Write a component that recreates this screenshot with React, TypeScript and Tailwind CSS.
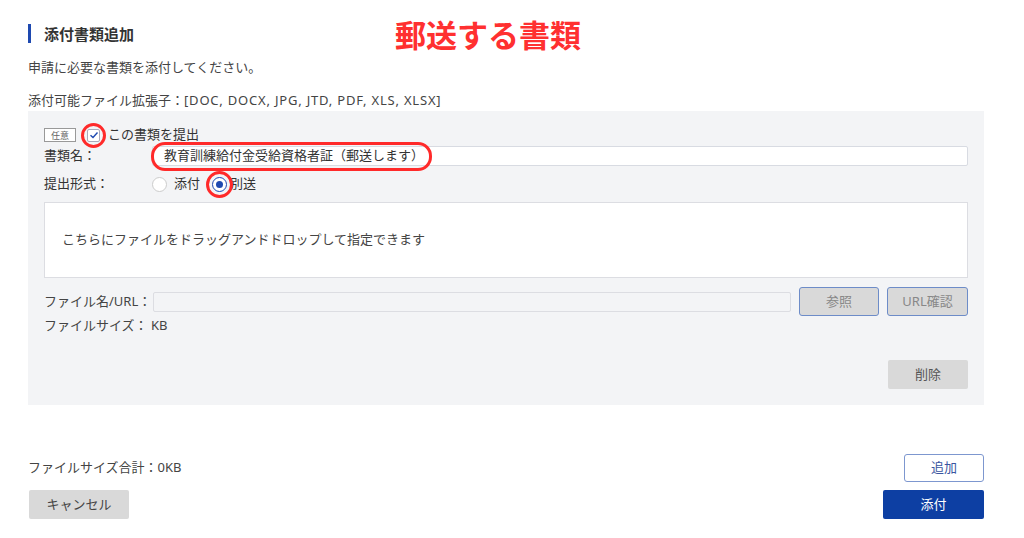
import React from "react";

const font = {
  fontFamily: '"Noto Sans", "Noto Sans CJK JP", sans-serif',
};

const Ring: React.FC<{ className: string }> = ({ className }) => (
  <span
    className={`pointer-events-none absolute rounded-full border-[3px] border-[#ff2a2a] ${className}`}
  />
);

const App: React.FC = () => {
  return (
    <div
      className="min-h-[538px] w-[1024px] bg-white pl-[28px] pr-[40px] text-[13px] text-[#444]"
      style={font}
    >
      {/* heading */}
      <div className="relative flex h-[50px] items-end pb-[5px]">
        <div className="flex items-center gap-[13px]">
          <span className="h-[19px] w-[3px] bg-[#1e49b0]" />
          <span className="text-[15px] font-bold text-[#333]">添付書類追加</span>
        </div>
        <span className="absolute left-[367px] top-[14px] text-[31px] font-bold leading-[42px] text-[#ff3030]">
          郵送する書類
        </span>
      </div>

      <p className="mt-[7px] leading-[20px]">申請に必要な書類を添付してください。</p>
      <p className="mt-[13px] leading-[20px]">
        添付可能ファイル拡張子：
        <span className="tracking-[0.8px]">[DOC, DOCX, JPG, JTD, PDF, XLS, XLSX]</span>
      </p>

      {/* panel */}
      <div className="mt-[1px] bg-[#f3f4f6] px-[16px] pb-[16px] pt-[14px]">
        <div className="flex h-[20px] items-center">
          <span className="flex h-[14px] w-[32px] items-center justify-center border border-[#999] bg-white text-[9px] leading-none text-[#666]">
            任意
          </span>
          <span className="relative ml-[11px] flex h-[13px] w-[13px] items-center justify-center rounded-[2px] border border-[#aab] bg-white">
            <svg width="10" height="10" viewBox="0 0 10 10" fill="none">
              <path d="M1.5 5.2 L4 7.5 L8.5 2.5" stroke="#1e49b0" strokeWidth="1.4" />
            </svg>
            <Ring className="-left-[7px] -top-[7px] h-[25px] w-[25px]" />
          </span>
          <span className="ml-[8px] text-[#333]">この書類を提出</span>
        </div>

        <div className="mt-[1px] flex h-[20px] items-center">
          <span className="w-[108px] text-[#333]">書類名：</span>
          <div className="relative flex h-[20px] flex-1 items-center rounded-[2px] border border-[#d8dbe2] bg-white pl-[11px] text-[#333]">
            教育訓練給付金受給資格者証（郵送します）
            <span className="pointer-events-none absolute -left-[2px] -top-[5px] h-[29px] w-[281px] rounded-[14px] border-[3px] border-[#ff2a2a]" />
          </div>
        </div>

        <div className="mt-[8px] flex h-[20px] items-center">
          <span className="w-[108px] text-[#333]">提出形式：</span>
          <span className="h-[15px] w-[15px] rounded-full border border-[#ccc] bg-white" />
          <span className="ml-[7px] text-[#333]">添付</span>
          <span className="relative ml-[12px] flex h-[15px] w-[15px] items-center justify-center rounded-full border border-[#1e49b0] bg-white">
            <span className="h-[7px] w-[7px] rounded-full bg-[#1e49b0]" />
            <Ring className="-left-[7px] -top-[7px] h-[27px] w-[27px]" />
          </span>
          <span className="ml-[3px] text-[#333]">別送</span>
        </div>

        <div className="mt-[8px] flex h-[76px] items-center border border-[#dcdde2] bg-white pl-[17px]">
          こちらにファイルをドラッグアンドドロップして指定できます
        </div>

        <div className="mt-[9px] flex h-[29px] items-center">
          <span className="w-[109px]">ファイル名/URL：</span>
          <div className="h-[20px] flex-1 rounded-[2px] border border-[#dcdde2] bg-[#f3f4f6]" />
          <button className="ml-[8px] h-[29px] w-[80px] rounded-[3px] border border-[#6d8cc8] bg-[#d9d9d9] text-[13px] text-[#888]">
            参照
          </button>
          <button className="ml-[8px] h-[29px] w-[81px] rounded-[3px] border border-[#6d8cc8] bg-[#d9d9d9] text-[13px] text-[#888]">
            URL確認
          </button>
        </div>

        <p className="mt-px leading-[16px]">ファイルサイズ： KB</p>

        <div className="mt-[27px] flex justify-end">
          <button className="h-[29px] w-[80px] rounded-[2px] bg-[#d9d9d9] text-[13px] text-[#555]">
            削除
          </button>
        </div>
      </div>

      {/* footer */}
      <div className="mt-[49px] flex h-[28px] items-center justify-between">
        <span>ファイルサイズ合計：0KB</span>
        <button className="h-[28px] w-[80px] rounded-[3px] border border-[#7d97cf] bg-white text-[13px] text-[#3a55a0]">
          追加
        </button>
      </div>
      <div className="mt-[8px] flex items-center justify-between">
        <button className="ml-px h-[29px] w-[100px] rounded-[2px] bg-[#d9d9d9] text-[13px] text-[#444]">
          キャンセル
        </button>
        <button className="h-[29px] w-[101px] rounded-[2px] bg-[#0d3fa3] text-[13px] text-white">
          添付
        </button>
      </div>
    </div>
  );
};

export default App;
